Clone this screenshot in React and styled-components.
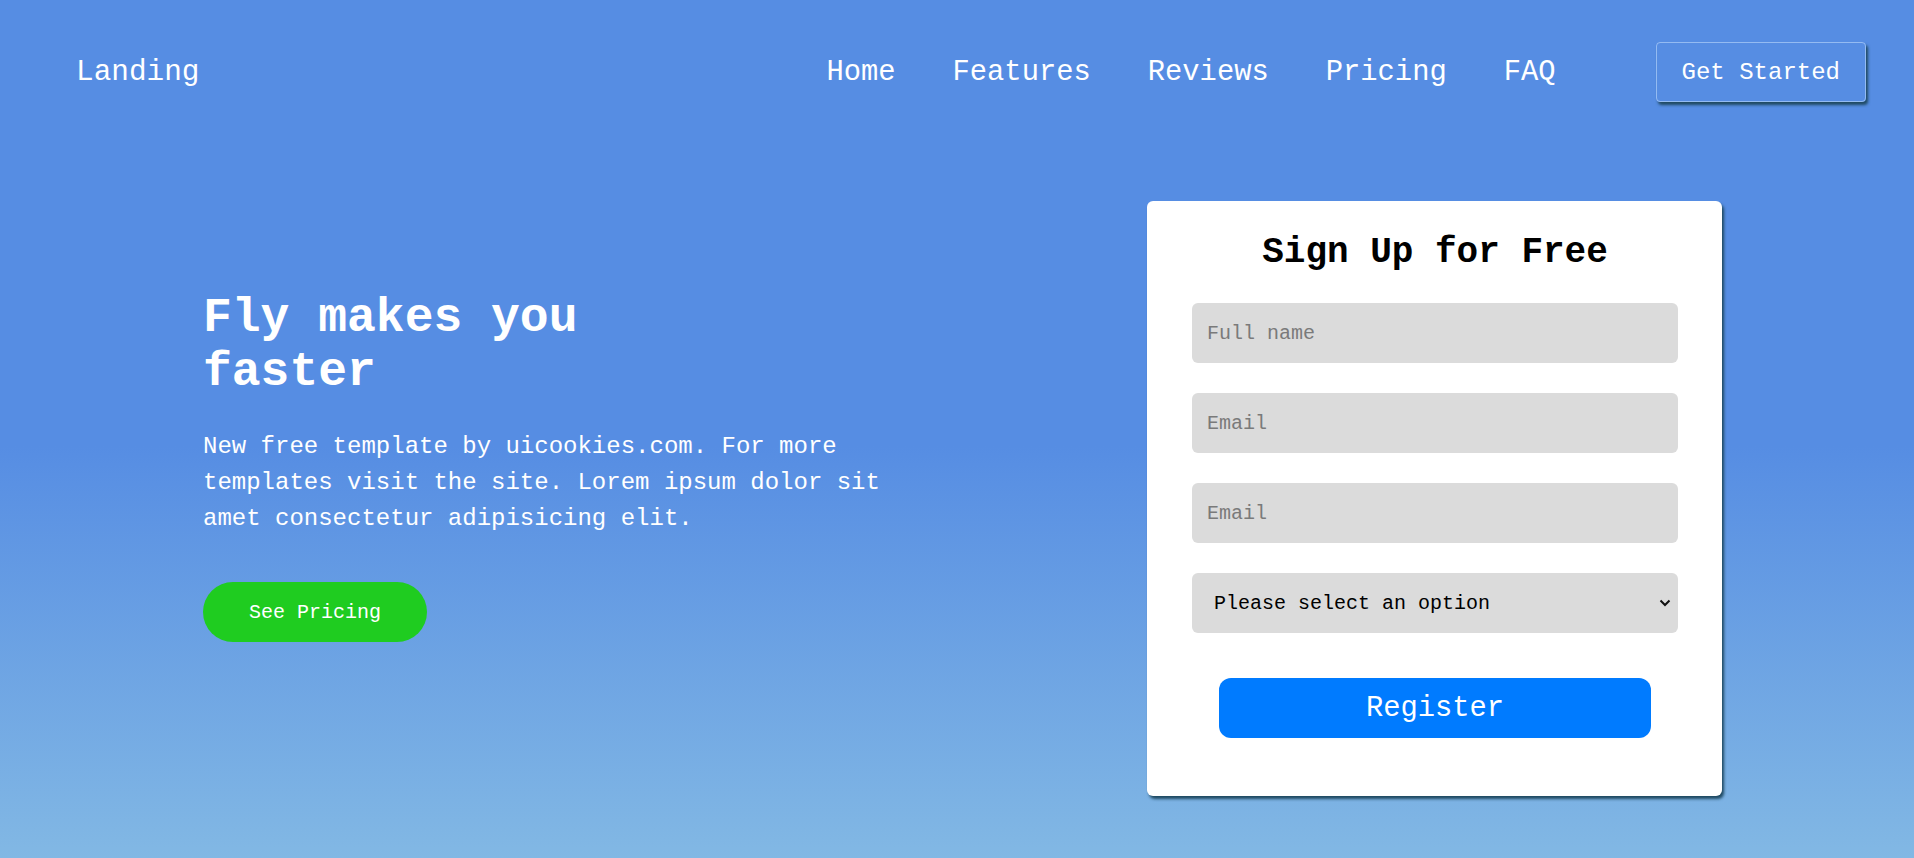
import React from 'react';
import styled, { createGlobalStyle } from 'styled-components';

const GlobalStyle = createGlobalStyle`
  * { box-sizing: border-box; }
  body {
    margin: 0;
    font-family: "Liberation Mono", "Courier New", monospace;
  }
`;

const Page = styled.div`
  min-height: 100vh;
  background: linear-gradient(180deg, #568de3 0%, #568de3 52%, #82b8e4 100%);
  color: #fff;
`;

const Header = styled.header`
  height: 144px;
  display: flex;
  align-items: center;
  padding: 0 48px 0 76px;
`;

const Brand = styled.a`
  font-size: 29.4px;
  color: #fff;
  text-decoration: none;
`;

const NavLinks = styled.nav`
  margin-left: auto;
  margin-right: 100px;
  display: flex;
  gap: 57px;
`;

const NavLink = styled.a`
  font-size: 28.8px;
  color: #fff;
  text-decoration: none;
`;

const StartButton = styled.button`
  height: 60px;
  padding: 0 25px;
  font-family: inherit;
  font-size: 24px;
  color: #fff;
  background: transparent;
  border: 1px solid rgba(200, 225, 255, 0.55);
  border-radius: 4px;
  box-shadow: 2px 3px 3px #1f4a62;
  cursor: pointer;
`;

const Main = styled.main`
  display: flex;
  justify-content: space-between;
  align-items: flex-start;
  padding: 57px 192px 0 203px;
`;

const Hero = styled.section`
  width: 720px;
  margin-top: 90px;
`;

const Title = styled.h1`
  max-width: 400px;
  margin: 0;
  font-size: 48px;
  line-height: 54px;
  font-weight: 700;
`;

const Lead = styled.p`
  margin: 30px 0 45px;
  font-size: 24px;
  line-height: 36px;
`;

const PillButton = styled.button`
  height: 60px;
  padding: 0 46px;
  font-family: inherit;
  font-size: 20px;
  color: #fff;
  background: #1fcc20;
  border: none;
  border-radius: 30px;
  cursor: pointer;
`;

const Card = styled.form`
  width: 575px;
  padding: 31px 44px 58px 45px;
  background: #fff;
  border-radius: 6px;
  box-shadow: 2px 3px 3px #1f4a62;
  display: flex;
  flex-direction: column;
  color: #000;
`;

const CardTitle = styled.h2`
  margin: 0 0 30px;
  font-size: 36px;
  font-weight: 700;
  text-align: center;
`;

const Fields = styled.div`
  display: flex;
  flex-direction: column;
  gap: 30px;
`;

const fieldBase = `
  width: 100%;
  height: 60px;
  padding: 0 15px;
  font-family: "Liberation Mono", "Courier New", monospace;
  font-size: 20px;
  background: #dbdbdb;
  border: none;
  border-radius: 6px;
  outline: none;
`;

const Input = styled.input`
  ${fieldBase}
  color: #000;
  &::placeholder { color: #7a7a7a; }
`;

const SelectWrap = styled.div`
  position: relative;
`;

const Select = styled.select`
  ${fieldBase}
  appearance: none;
  -webkit-appearance: none;
  padding-left: 22px;
  color: #000;
`;

const Chevron = styled.svg`
  position: absolute;
  right: 7px;
  top: 50%;
  width: 12px;
  height: 8px;
  margin-top: -4px;
  pointer-events: none;
`;

const Register = styled.button`
  align-self: center;
  width: 432px;
  height: 60px;
  margin-top: 45px;
  font-family: inherit;
  font-size: 28.8px;
  color: #fff;
  background: #007bff;
  border: none;
  border-radius: 12px;
  cursor: pointer;
`;

const links = ['Home', 'Features', 'Reviews', 'Pricing', 'FAQ'];

export default function App() {
  return (
    <Page>
      <GlobalStyle />
      <Header>
        <Brand href="#">Landing</Brand>
        <NavLinks>
          {links.map((l) => (
            <NavLink key={l} href="#">{l}</NavLink>
          ))}
        </NavLinks>
        <StartButton>Get Started</StartButton>
      </Header>
      <Main>
        <Hero>
          <Title>Fly makes you faster</Title>
          <Lead>
            New free template by uicookies.com. For more templates visit the site. Lorem ipsum dolor sit amet consectetur adipisicing elit.
          </Lead>
          <PillButton>See Pricing</PillButton>
        </Hero>
        <Card onSubmit={(e) => e.preventDefault()}>
          <CardTitle>Sign Up for Free</CardTitle>
          <Fields>
            <Input type="text" placeholder="Full name" />
            <Input type="email" placeholder="Email" />
            <Input type="email" placeholder="Email" />
            <SelectWrap>
              <Select defaultValue="">
                <option value="">Please select an option</option>
                <option value="a">Option A</option>
                <option value="b">Option B</option>
              </Select>
              <Chevron viewBox="0 0 12 8">
                <path d="M1.5 1.5 L6 6 L10.5 1.5" fill="none" stroke="#111" strokeWidth="2" />
              </Chevron>
            </SelectWrap>
          </Fields>
          <Register type="submit">Register</Register>
        </Card>
      </Main>
    </Page>
  );
}
